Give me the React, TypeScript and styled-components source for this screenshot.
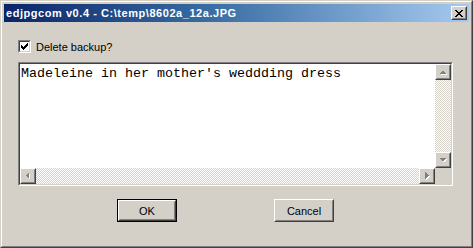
import React from "react";
import styled, { createGlobalStyle } from "styled-components";

const Global = createGlobalStyle`
  html, body { margin: 0; padding: 0; background: #d4d0c8; }
  body { font-family: "Liberation Sans", Arial, sans-serif; font-size: 11px; }
`;

const FACE = "#d4d0c8";
const SHADOW = "#808080";
const DARK = "#404040";

const Window = styled.div`
  width: 473px;
  height: 248px;
  box-sizing: border-box;
  border: 1px solid;
  border-color: ${FACE} ${DARK} ${DARK} ${FACE};
  background: ${FACE};
  display: flex;
`;

const WindowInner = styled.div`
  flex: 1;
  border: 1px solid;
  border-color: #fff ${SHADOW} ${SHADOW} #fff;
  padding: 2px 2px 2px 2px;
  display: flex;
  flex-direction: column;
`;

const TitleBar = styled.div`
  height: 18px;
  background: linear-gradient(to right, #0a246a 0%, #3a6ea5 45%, #a6caf0 100%);
  display: flex;
  align-items: center;
  justify-content: space-between;
  padding: 0 2px 0 2px;
`;

const TitleText = styled.span`
  color: #fff;
  font-family: "Liberation Sans", Arial, sans-serif;
  font-weight: bold;
  font-size: 11px;
  letter-spacing: 0.55px;
  white-space: nowrap;
`;

const Raised = styled.div<{ $w: number; $h: number }>`
  width: ${(p) => p.$w}px;
  height: ${(p) => p.$h}px;
  box-sizing: border-box;
  border: 1px solid;
  border-color: #fff ${DARK} ${DARK} #fff;
  background: ${FACE};
  display: flex;
`;

const RaisedInner = styled.div`
  flex: 1;
  border: 1px solid;
  border-color: ${FACE} ${SHADOW} ${SHADOW} ${FACE};
  display: flex;
  align-items: center;
  justify-content: center;
`;

const Body = styled.div`
  flex: 1;
  display: flex;
  flex-direction: column;
  padding: 18px 16px 0 14px;
`;

const CheckRow = styled.label`
  display: flex;
  align-items: center;
  gap: 5px;
  height: 13px;
  color: #000;
  font-size: 11px;
`;

const CheckOuter = styled.div`
  width: 13px;
  height: 13px;
  box-sizing: border-box;
  border: 1px solid;
  border-color: ${SHADOW} #fff #fff ${SHADOW};
  display: flex;
`;

const CheckInner = styled.div`
  flex: 1;
  border: 1px solid;
  border-color: ${DARK} ${FACE} ${FACE} ${DARK};
  background: #fff;
  display: flex;
  align-items: center;
  justify-content: center;
`;

const SunkenOuter = styled.div`
  margin-top: 9px;
  width: 435px;
  height: 124px;
  box-sizing: border-box;
  border: 1px solid;
  border-color: ${SHADOW} #fff #fff ${SHADOW};
  display: flex;
`;

const SunkenInner = styled.div`
  flex: 1;
  border: 1px solid;
  border-color: ${DARK} ${FACE} ${FACE} ${DARK};
  display: grid;
  grid-template-columns: 1fr 16px;
  grid-template-rows: 1fr 16px;
`;

const TextArea = styled.div`
  background: #fff;
  font-family: "Liberation Mono", "Courier New", monospace;
  font-size: 13.33px;
  line-height: 15px;
  color: #000;
  padding: 2px 1px;
  white-space: pre;
  overflow: hidden;
`;

const VScroll = styled.div`
  display: flex;
  flex-direction: column;
`;

const HScroll = styled.div`
  display: flex;
`;

const Track = styled.div`
  flex: 1;
  background: repeating-conic-gradient(${FACE} 0 25%, #fff 0 50%) 0 0 / 2px 2px;
`;

const Corner = styled.div`
  background: ${FACE};
`;

const ButtonRow = styled.div`
  margin-top: 13px;
  display: flex;
  padding-left: 99px;
  gap: 97px;
`;

const DefaultFrame = styled.div`
  width: 60px;
  height: 23px;
  box-sizing: border-box;
  border: 1px solid #000;
  display: flex;
`;

const PushButton = styled.div<{ $fill?: boolean }>`
  flex: ${(p) => (p.$fill ? 1 : "none")};
  width: ${(p) => (p.$fill ? "auto" : "60px")};
  height: ${(p) => (p.$fill ? "auto" : "23px")};
  box-sizing: border-box;
  border: 1px solid;
  border-color: #fff ${DARK} ${DARK} #fff;
  background: ${FACE};
  display: flex;
`;

const PushInner = styled.div`
  flex: 1;
  border: 1px solid;
  border-color: ${FACE} ${SHADOW} ${SHADOW} ${FACE};
  display: flex;
  align-items: center;
  justify-content: center;
  font-size: 11px;
  color: #000;
`;

type Dir = "up" | "down" | "left" | "right";

const arrowPts: Record<Dir, string> = {
  up: "4,10 11,10 7.5,6.5",
  down: "4,6 11,6 7.5,9.5",
  left: "9,4 9,11 5.5,7.5",
  right: "6,4 6,11 9.5,7.5",
};

function Arrow({ dir }: { dir: Dir }) {
  return (
    <svg width="12" height="12" viewBox="2 2 12 12" shapeRendering="crispEdges">
      <polygon points={arrowPts[dir]} fill="#fff" transform="translate(1,1)" />
      <polygon points={arrowPts[dir]} fill={SHADOW} />
    </svg>
  );
}

function ScrollButton({ dir }: { dir: Dir }) {
  return (
    <Raised $w={16} $h={16}>
      <RaisedInner>
        <Arrow dir={dir} />
      </RaisedInner>
    </Raised>
  );
}

export default function App() {
  return (
    <>
      <Global />
      <Window>
        <WindowInner>
          <TitleBar>
            <TitleText>edjpgcom v0.4 - C:\temp\8602a_12a.JPG</TitleText>
            <Raised $w={16} $h={14}>
              <RaisedInner>
                <svg width="8" height="7" viewBox="0 0 8 7" shapeRendering="crispEdges">
                  <path d="M0 0h2l2 2.5L6 0h2L5 3.5 8 7H6L4 4.5 2 7H0l3-3.5z" fill="#000" />
                </svg>
              </RaisedInner>
            </Raised>
          </TitleBar>
          <Body>
            <CheckRow>
              <CheckOuter>
                <CheckInner>
                  <svg width="7" height="7" viewBox="0 0 7 7" shapeRendering="crispEdges">
                    <path d="M0 2h1v1h1v1h1V3h1V2h1V1h1V0h1v3H6v1H5v1H4v1H3v1H2V6H1V5H0z" fill="#000" />
                  </svg>
                </CheckInner>
              </CheckOuter>
              <span>Delete backup?</span>
            </CheckRow>
            <SunkenOuter>
              <SunkenInner>
                <TextArea>Madeleine in her mother's weddding dress</TextArea>
                <VScroll>
                  <ScrollButton dir="up" />
                  <Track />
                  <ScrollButton dir="down" />
                </VScroll>
                <HScroll>
                  <ScrollButton dir="left" />
                  <Track />
                  <ScrollButton dir="right" />
                </HScroll>
                <Corner />
              </SunkenInner>
            </SunkenOuter>
            <ButtonRow>
              <DefaultFrame>
                <PushButton $fill>
                  <PushInner>OK</PushInner>
                </PushButton>
              </DefaultFrame>
              <PushButton>
                <PushInner>Cancel</PushInner>
              </PushButton>
            </ButtonRow>
          </Body>
        </WindowInner>
      </Window>
    </>
  );
}
